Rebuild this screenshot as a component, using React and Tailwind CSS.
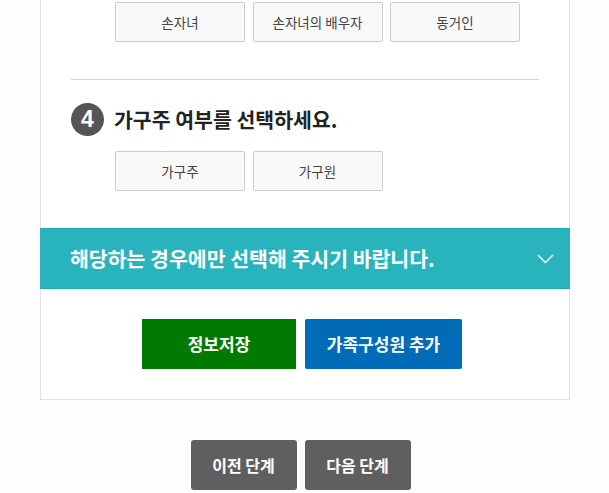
const font = { fontFamily: '"Noto Sans CJK KR", "Noto Sans", sans-serif' }

function OptionButton({ label }) {
  return (
    <button className="w-[130px] h-[40px] flex items-center justify-center rounded-[2px] border border-[#cccccc] bg-[#f9f9f9] text-[13.5px] text-[#444444]">
      {label}
    </button>
  )
}

function ChevronDown() {
  return (
    <svg width="17" height="10" viewBox="0 0 17 10" fill="none">
      <path d="M1 1l7.5 7.5L16 1" stroke="#ffffff" strokeWidth="1.4" />
    </svg>
  )
}

export default function App() {
  return (
    <div className="w-[609px] h-[493px] bg-[#fdfdfd] overflow-hidden" style={font}>
      <div className="ml-[40px] w-[530px] bg-white border-x border-b border-[#e2e2e2]">
        <div className="pl-[74px] pt-[2px] flex gap-[7.5px]">
          <OptionButton label="손자녀" />
          <OptionButton label="손자녀의 배우자" />
          <OptionButton label="동거인" />
        </div>

        <div className="mx-[30px] mt-[37px] h-px bg-[#d3d3d3]" />

        <div className="pl-[30px] pt-[23px] flex items-center gap-[10px]">
          <span className="w-[33px] h-[33px] rounded-full bg-[#555555] text-white text-[23px] font-bold flex items-center justify-center leading-none" style={{ fontFamily: '"Liberation Sans", sans-serif' }}>
            4
          </span>
          <h2 className="text-[20.5px] font-bold text-[#222222] leading-none">가구주 여부를 선택하세요.</h2>
        </div>

        <div className="pl-[74px] pt-[15px] flex gap-[7.5px]">
          <OptionButton label="가구주" />
          <OptionButton label="가구원" />
        </div>

        <div className="mt-[37px] -mx-px h-[61px] bg-[#29b3bd] border-y border-[#22a8b2] flex items-center justify-between pl-[30px] pr-[16px]">
          <span className="text-[20.5px] font-bold text-white">해당하는 경우에만 선택해 주시기 바랍니다.</span>
          <ChevronDown />
        </div>

        <div className="pt-[30px] pb-[30px] flex justify-center gap-[9px] pr-[6px]">
          <button className="w-[154px] h-[50px] bg-[#007a00] text-white text-[17px] font-bold">정보저장</button>
          <button className="w-[157px] h-[50px] bg-[#006cb8] rounded-[2px] text-white text-[17px] font-bold">가족구성원 추가</button>
        </div>
      </div>

      <div className="pt-[40px] flex justify-center gap-[8px] pr-[8px]">
        <button className="w-[106px] h-[50px] rounded-[3px] bg-[#5f5f5f] text-white text-[16px] font-bold">이전 단계</button>
        <button className="w-[106px] h-[50px] rounded-[3px] bg-[#5f5f5f] text-white text-[16px] font-bold">다음 단계</button>
      </div>
    </div>
  )
}
